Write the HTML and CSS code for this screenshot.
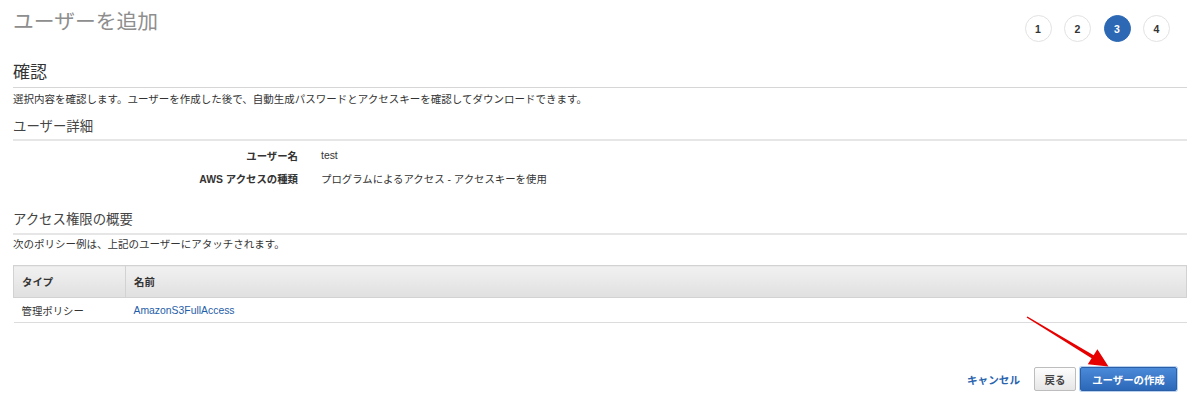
FILE: index.html
```html
<!DOCTYPE html>
<html lang="ja">
<head>
<meta charset="utf-8">
<title>ユーザーを追加</title>
<link rel="stylesheet" href="styles.css">
</head>
<body>
<div class="page">
  <header class="top">
    <h1 class="title">ユーザーを追加</h1>
    <ol class="steps">
      <li class="step">1</li>
      <li class="step">2</li>
      <li class="step active">3</li>
      <li class="step">4</li>
    </ol>
  </header>

  <section class="review">
    <h2 class="h-main">確認</h2>
    <p class="desc">選択内容を確認します。ユーザーを作成した後で、自動生成パスワードとアクセスキーを確認してダウンロードできます。</p>

    <h3 class="h-sub">ユーザー詳細</h3>
    <dl class="details">
      <div class="drow"><dt>ユーザー名</dt><dd>test</dd></div>
      <div class="drow"><dt>AWS アクセスの種類</dt><dd>プログラムによるアクセス - アクセスキーを使用</dd></div>
    </dl>

    <h3 class="h-sub h-perm">アクセス権限の概要</h3>
    <p class="desc desc-perm">次のポリシー例は、上記のユーザーにアタッチされます。</p>

    <table class="policy">
      <thead>
        <tr><th class="c-type">タイプ</th><th class="c-name">名前</th></tr>
      </thead>
      <tbody>
        <tr><td class="c-type">管理ポリシー</td><td class="c-name"><a class="link" href="#">AmazonS3FullAccess</a></td></tr>
      </tbody>
    </table>
  </section>

  <footer class="actions">
    <a class="cancel" href="#">キャンセル</a>
    <button class="btn btn-back" type="button">戻る</button>
    <button class="btn btn-primary" type="button">ユーザーの作成</button>
  </footer>

  <svg class="arrow" width="100" height="66" viewBox="0 0 100 66" aria-hidden="true">
    <polygon points="6.6,7.5 7.4,6.5 73.6,45.2 77.4,39.2 88.5,56.5 67.8,54.2 71.6,48.2" fill="#e60000"/>
  </svg>
</div>
</body>
</html>
```

FILE: styles.css
```css
* { box-sizing: border-box; }

html, body {
  margin: 0;
  padding: 0;
  background: #fff;
}

body {
  font-family: "Liberation Sans", "Noto Sans CJK JP", sans-serif;
  color: #333;
  font-size: 10.5px;
}

.page {
  position: relative;
  width: 1200px;
  height: 416px;
  padding: 0 13px;
}

.top {
  display: flex;
  justify-content: space-between;
  align-items: flex-start;
  padding-right: 17px;
}

.title {
  margin: 0;
  padding-top: 7px;
  font-size: 20.8px;
  line-height: 30px;
  font-weight: normal;
  color: #8e8e8e;
}

.steps {
  list-style: none;
  display: flex;
  gap: 12.5px;
  margin: 15px 0 0;
  padding: 0;
}

.step {
  width: 27px;
  height: 27px;
  border-radius: 50%;
  border: 1.5px solid #e2e2e2;
  background: #fff;
  display: flex;
  align-items: center;
  justify-content: center;
  font-size: 10.5px;
  font-weight: bold;
  color: #333;
}

.step.active {
  background: #2c68b3;
  border-color: #2c68b3;
  color: #fff;
}

.h-main {
  margin: 19px 0 0;
  font-size: 17px;
  line-height: 24px;
  font-weight: normal;
  color: #333;
  padding-bottom: 2px;
  border-bottom: 1px solid #d6d6d6;
}

.desc {
  margin: 3px 0 0;
  font-size: 10.5px;
  line-height: 16px;
  color: #333;
}

.h-sub {
  margin: 10px 0 0;
  font-size: 13.4px;
  line-height: 20px;
  font-weight: normal;
  color: #444;
  padding-bottom: 2px;
  border-bottom: 2px solid #e6e6e6;
}

.details {
  margin: 3px 0 0;
}

.drow {
  display: flex;
  align-items: center;
  height: 23px;
}

.drow dt {
  width: 285px;
  text-align: right;
  font-weight: bold;
  font-size: 10.4px;
  color: #333;
}

.drow dd {
  margin: 0 0 0 23px;
  font-size: 10.4px;
  color: #333;
}

.h-perm {
  margin-top: 20px;
  padding-bottom: 3px;
}

.desc-perm {
  margin-top: 1px;
}

.policy {
  width: 100%;
  margin-top: 13px;
  border-collapse: collapse;
  font-size: 10.4px;
}

.policy th {
  height: 32px;
  text-align: left;
  font-weight: bold;
  color: #333;
  padding: 0 8px;
  background: linear-gradient(#f1f1f1, #e0e0e0);
  border: 1px solid #d2d2d2;
}

.policy td {
  height: 25px;
  padding: 0 8px;
  border-bottom: 1px solid #dcdcdc;
  color: #333;
}

.policy .c-type { width: 112px; }

.link {
  color: #1f5ea8;
  text-decoration: none;
}

.actions {
  display: flex;
  justify-content: flex-end;
  align-items: center;
  margin-top: 44px;
  padding-right: 10px;
}

.cancel {
  font-size: 10.6px;
  font-weight: bold;
  color: #2a64ae;
  text-decoration: none;
  margin-right: 14px;
}

.btn {
  height: 24px;
  border-radius: 2px;
  font-family: "Liberation Sans", "Noto Sans CJK JP", sans-serif;
  font-size: 10.4px;
  font-weight: bold;
  padding: 0;
  cursor: pointer;
}

.btn-back {
  width: 42px;
  color: #444;
  background: linear-gradient(#fdfdfd, #e6e6e6);
  border: 1px solid #bdbdbd;
  margin-right: 4px;
}

.btn-primary {
  width: 97px;
  color: #fff;
  background: linear-gradient(#4b8ad8, #2c68b8);
  border: 1px solid #2a5fa8;
  box-shadow: 0 0 0 1px #b7d0ef;
}

.arrow {
  position: absolute;
  left: 1020px;
  top: 310px;
}
```
